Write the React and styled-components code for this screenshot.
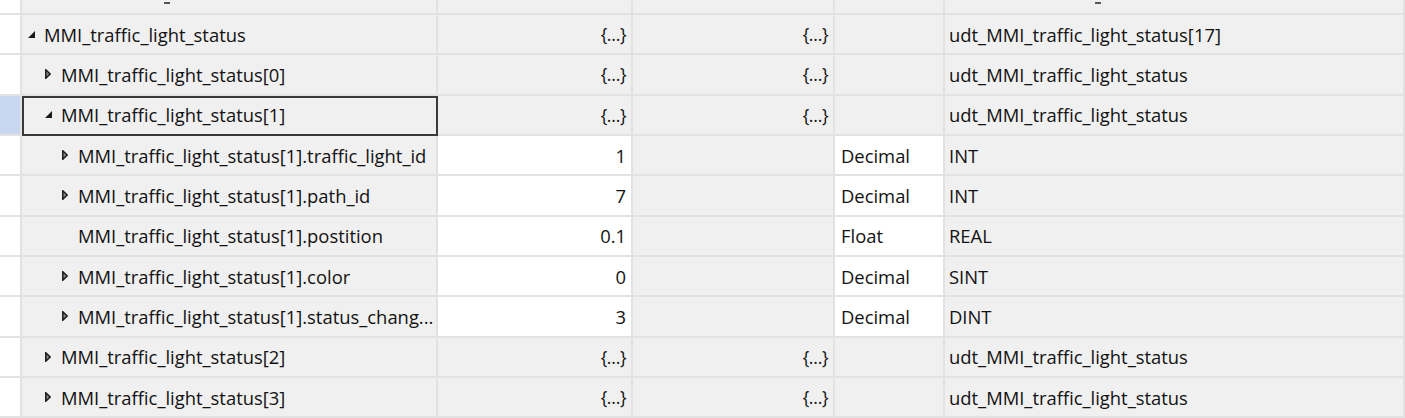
import React from "react";
import styled, { createGlobalStyle } from "styled-components";

const GlobalStyle = createGlobalStyle`
  html, body {
    margin: 0;
    padding: 0;
    background: #ffffff;
    overflow: hidden;
  }
  body {
    font-family: "Open Sans", "Noto Sans", sans-serif;
    font-size: 18.4px;
    color: #121212;
  }
`;

const LINE = "#e2e2e2";

const Table = styled.div`
  width: 1405px;
  height: 418px;
  overflow: hidden;
  display: flex;
  flex-direction: column;
`;

const Row = styled.div`
  display: grid;
  grid-template-columns: 22px 416px 195px 202px 110px 1fr;
  height: ${(p) => (p.$peek ? "15px" : "40.33px")};
  flex-shrink: 0;
`;

const Cell = styled.div`
  box-sizing: border-box;
  border-right: 2px solid ${LINE};
  border-bottom: 2px solid ${LINE};
  background: ${(p) => (p.$white ? "#ffffff" : "#f0f0f0")};
  display: flex;
  align-items: center;
  overflow: hidden;
  white-space: nowrap;
  min-width: 0;
`;

const Strip = styled(Cell)`
  background: ${(p) => (p.$selected ? "#c8d7ef" : "#ffffff")};
`;

const NameCell = styled(Cell)`
  padding-left: ${(p) => 6 + p.$level * 17}px;
  ${(p) => p.$focused && `outline: 2px solid #3a3a3a; outline-offset: -2px;`}
`;

const NumCell = styled(Cell)`
  justify-content: flex-end;
  padding-right: 5px;
`;

const TextCell = styled(Cell)`
  padding-left: ${(p) => p.$pad}px;
`;

const Peek = styled(Cell)`
  align-items: flex-end;
  padding-left: ${(p) => p.$pad}px;
  line-height: 1;
`;

const PeekMark = styled.span`
  display: block;
  width: 6px;
  height: 2px;
  margin-bottom: 9px;
  background: #555;
`;

const Toggle = styled.span`
  width: 16px;
  flex-shrink: 0;
  display: flex;
  align-items: center;
`;

const Label = styled.span`
  overflow: hidden;
  text-overflow: ellipsis;
`;

const Struct = styled.span`
  font-size: 17.5px;
  letter-spacing: -0.5px;
`;

function Expander({ state }) {
  if (state === "open") {
    return (
      <Toggle>
        <svg width="7" height="7" viewBox="0 0 7 7">
          <polygon points="7,0 7,7 0,7" fill="#1b1b1b" />
        </svg>
      </Toggle>
    );
  }
  if (state === "closed") {
    return (
      <Toggle>
        <svg width="6" height="10" viewBox="0 0 6 10">
          <polygon
            points="0.8,0.8 5.2,5 0.8,9.2"
            fill="#8a8a8a"
            stroke="#1b1b1b"
            strokeWidth="1.5"
            strokeLinejoin="miter"
          />
        </svg>
      </Toggle>
    );
  }
  return <Toggle />;
}

const rows = [
  { level: 0, toggle: "open", name: "MMI_traffic_light_status", value: "{…}", monitor: "{…}", format: "", type: "udt_MMI_traffic_light_status[17]" },
  { level: 1, toggle: "closed", name: "MMI_traffic_light_status[0]", value: "{…}", monitor: "{…}", format: "", type: "udt_MMI_traffic_light_status" },
  { level: 1, toggle: "open", name: "MMI_traffic_light_status[1]", value: "{…}", monitor: "{…}", format: "", type: "udt_MMI_traffic_light_status", selected: true },
  { level: 2, toggle: "closed", name: "MMI_traffic_light_status[1].traffic_light_id", value: "1", format: "Decimal", type: "INT", leaf: true },
  { level: 2, toggle: "closed", name: "MMI_traffic_light_status[1].path_id", value: "7", format: "Decimal", type: "INT", leaf: true },
  { level: 2, toggle: null, name: "MMI_traffic_light_status[1].postition", value: "0.1", format: "Float", type: "REAL", leaf: true },
  { level: 2, toggle: "closed", name: "MMI_traffic_light_status[1].color", value: "0", format: "Decimal", type: "SINT", leaf: true },
  { level: 2, toggle: "closed", name: "MMI_traffic_light_status[1].status_chang...", value: "3", format: "Decimal", type: "DINT", leaf: true },
  { level: 1, toggle: "closed", name: "MMI_traffic_light_status[2]", value: "{…}", monitor: "{…}", format: "", type: "udt_MMI_traffic_light_status" },
  { level: 1, toggle: "closed", name: "MMI_traffic_light_status[3]", value: "{…}", monitor: "{…}", format: "", type: "udt_MMI_traffic_light_status" },
];

export default function App() {
  return (
    <>
      <GlobalStyle />
      <Table>
        <Row $peek>
          <Strip />
          <Peek $pad={142}>
            <PeekMark />
          </Peek>
          <Cell />
          <Cell />
          <Cell />
          <Peek $pad={150}>
            <PeekMark />
          </Peek>
        </Row>
        {rows.map((r) => (
          <Row key={r.name}>
            <Strip $selected={r.selected} />
            <NameCell $level={r.level} $focused={r.selected}>
              <Expander state={r.toggle} />
              <Label>{r.name}</Label>
            </NameCell>
            <NumCell $white={r.leaf}>
              {r.leaf ? r.value : <Struct>{r.value}</Struct>}
            </NumCell>
            <NumCell>{r.monitor && <Struct>{r.monitor}</Struct>}</NumCell>
            <TextCell $white={r.leaf} $pad={6}>
              {r.format}
            </TextCell>
            <TextCell $pad={4}>{r.type}</TextCell>
          </Row>
        ))}
      </Table>
    </>
  );
}
